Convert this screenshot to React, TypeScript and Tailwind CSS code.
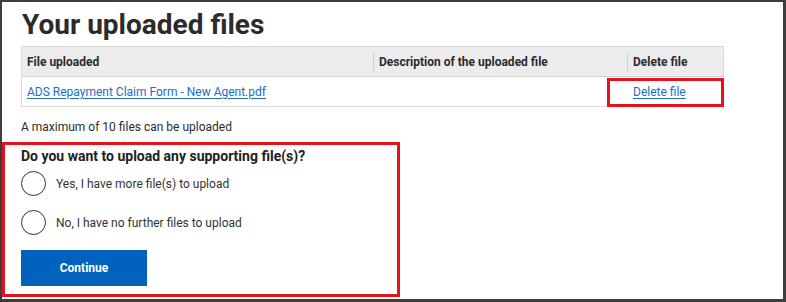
import React from "react";

const FILES = [{ name: "ADS Repayment Claim Form - New Agent.pdf", description: "" }];

const OPTIONS = [
  "Yes, I have more file(s) to upload",
  "No, I have no further files to upload",
];

export default function App() {
  return (
    <div className="w-[786px] h-[302px] bg-white border-t-2 border-l-2 border-r-[3px] border-b-[3px] border-[#3d3d3d] font-['Roboto',sans-serif] text-[#2b2b2b] overflow-hidden">
      <h1 className="ml-[20px] pt-[8px] text-[28px] leading-[29px] font-bold text-[#2b2b2b]">
        Your uploaded files
      </h1>

      <div className="relative ml-[19px] mt-[7px] w-[703px] border border-[#d9d9d9]">
        <div className="grid grid-cols-[351px_254px_96px] bg-[#ececec] border-b border-[#d2d2d2] text-[12px] font-bold">
          <div className="h-[29px] flex items-center px-[5px]">File uploaded</div>
          <div className="h-[29px] flex items-center">
            <div className="h-[18px] w-full flex items-center border-l border-[#cdcdcd] px-[5px]">
              Description of the uploaded file
            </div>
          </div>
          <div className="h-[29px] flex items-center">
            <div className="h-[18px] w-full flex items-center border-l border-[#cdcdcd] px-[5px]">
              Delete file
            </div>
          </div>
        </div>

        {FILES.map(f => (
          <div key={f.name} className="grid grid-cols-[351px_254px_96px] text-[12px]">
            <div className="h-[29px] flex items-center px-[5px]">
              <a href="#" className="text-[#1b6ec2] underline underline-offset-2">{f.name}</a>
            </div>
            <div className="h-[29px] flex items-center px-[5px]">{f.description}</div>
            <div className="h-[29px] flex items-center px-[6px]">
              <a href="#" className="text-[#1b6ec2] underline underline-offset-2">Delete file</a>
            </div>
          </div>
        ))}

        {/* annotation */}
        <div className="absolute left-[585px] top-[31px] w-[117px] h-[29px] border-[3px] border-[#e5121b]" />
      </div>

      <p className="ml-[19px] mt-[12px] text-[12px] leading-[17px] text-[#2b2b2b]">
        A maximum of 10 files can be uploaded
      </p>

      <div className="mt-[6px] w-[398px] h-[155px] border-[3px] border-[#e5121b] pl-[16px] pt-[1px]">
        <p className="text-[14px] leading-[20px] font-bold text-[#222]">
          Do you want to upload any supporting file(s)?
        </p>

        <div className="mt-[5px] flex flex-col gap-[14px]">
          {OPTIONS.map(o => (
            <label key={o} className="flex items-center gap-[10px] h-[25px]">
              <span className="w-[25px] h-[25px] rounded-full border-[1.5px] border-[#333] flex-shrink-0" />
              <span className="text-[12px] text-[#333]">{o}</span>
            </label>
          ))}
        </div>

        <button className="mt-[15px] w-[126px] h-[36px] bg-[#0062bd] text-white text-[12px] font-bold">
          Continue
        </button>
      </div>
    </div>
  );
}
